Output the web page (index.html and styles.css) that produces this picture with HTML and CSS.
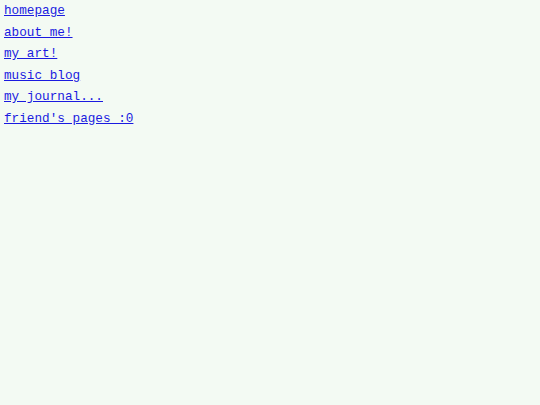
FILE: index.html
```html
<!DOCTYPE html>
<html>
<head>
<meta charset="utf-8">
<link rel="stylesheet" href="styles.css">
</head>
<body>
<nav class="nav">
<a class="nav-link" href="#">homepage</a>
<a class="nav-link" href="#">about me!</a>
<a class="nav-link" href="#">my art!</a>
<a class="nav-link" href="#">music blog</a>
<a class="nav-link" href="#">my journal...</a>
<a class="nav-link" href="#">friend's pages :0</a>
</nav>
</body>
</html>
```
FILE: styles.css
```css
html, body {
  background: #f3faf3;
}
body {
  margin: 0;
  padding: 0 4px;
  font-family: "Liberation Mono", "Courier New", monospace;
  font-size: 12.7px;
}
.nav {
  display: flex;
  flex-direction: column;
  align-items: flex-start;
}
.nav-link {
  color: #1a1ae0;
  line-height: 21.5px;
}
```
